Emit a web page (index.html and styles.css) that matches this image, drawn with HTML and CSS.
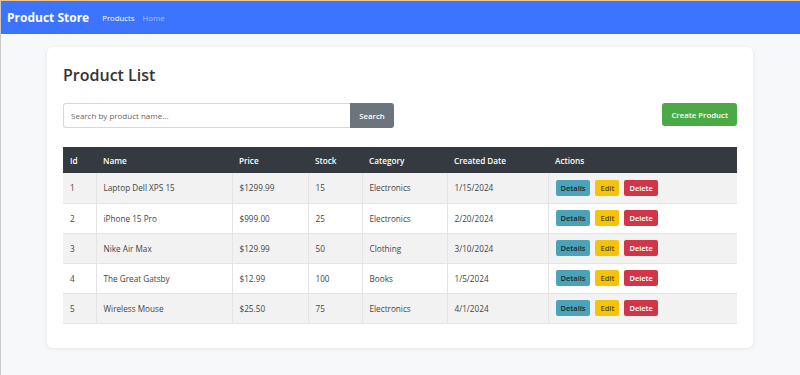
FILE: index.html
```html
<!DOCTYPE html>
<html lang="en">
<head>
    <meta charset="UTF-8">
    <meta name="viewport" content="width=device-width, initial-scale=1.0">
    <title>Product Store</title>
    <link rel="stylesheet" href="styles.css">
</head>
<body>
    <div class="frame">
        <nav class="navbar">
            <span class="brand">Product Store</span>
            <a class="nav-link active" href="#">Products</a>
            <a class="nav-link" href="#">Home</a>
        </nav>

        <main class="page">
            <div class="card">
                <h1>Product List</h1>

                <div class="toolbar">
                    <form class="search" onsubmit="return false;">
                        <input type="text" placeholder="Search by product name...">
                        <button class="btn btn-secondary" type="submit">Search</button>
                    </form>
                    <button class="btn btn-success">Create Product</button>
                </div>

                <table class="table">
                    <thead>
                        <tr>
                            <th class="col-id">Id</th>
                            <th class="col-name">Name</th>
                            <th class="col-price">Price</th>
                            <th class="col-stock">Stock</th>
                            <th class="col-cat">Category</th>
                            <th class="col-date">Created Date</th>
                            <th>Actions</th>
                        </tr>
                    </thead>
                    <tbody>
                        <tr>
                            <td>1</td><td>Laptop Dell XPS 15</td><td>$1299.99</td><td>15</td><td>Electronics</td><td>1/15/2024</td>
                            <td class="actions"><button class="btn-sm info">Details</button><button class="btn-sm warning">Edit</button><button class="btn-sm danger">Delete</button></td>
                        </tr>
                        <tr>
                            <td>2</td><td>iPhone 15 Pro</td><td>$999.00</td><td>25</td><td>Electronics</td><td>2/20/2024</td>
                            <td class="actions"><button class="btn-sm info">Details</button><button class="btn-sm warning">Edit</button><button class="btn-sm danger">Delete</button></td>
                        </tr>
                        <tr>
                            <td>3</td><td>Nike Air Max</td><td>$129.99</td><td>50</td><td>Clothing</td><td>3/10/2024</td>
                            <td class="actions"><button class="btn-sm info">Details</button><button class="btn-sm warning">Edit</button><button class="btn-sm danger">Delete</button></td>
                        </tr>
                        <tr>
                            <td>4</td><td>The Great Gatsby</td><td>$12.99</td><td>100</td><td>Books</td><td>1/5/2024</td>
                            <td class="actions"><button class="btn-sm info">Details</button><button class="btn-sm warning">Edit</button><button class="btn-sm danger">Delete</button></td>
                        </tr>
                        <tr>
                            <td>5</td><td>Wireless Mouse</td><td>$25.50</td><td>75</td><td>Electronics</td><td>4/1/2024</td>
                            <td class="actions"><button class="btn-sm info">Details</button><button class="btn-sm warning">Edit</button><button class="btn-sm danger">Delete</button></td>
                        </tr>
                    </tbody>
                </table>
            </div>
        </main>
    </div>
</body>
</html>
```

FILE: styles.css
```css
* {
    box-sizing: border-box;
}

body {
    margin: 0;
    font-family: "Open Sans", "Noto Sans", sans-serif;
    background-color: #f7f8fa;
    color: #333;
}

/* thin window edge seen in the capture */
.frame {
    min-height: 375px;
    border-top: 1px solid #f2c48c;
    border-left: 1px solid #c9c9c9;
}

.navbar {
    display: flex;
    align-items: center;
    height: 33px;
    padding: 0 6px;
    background-color: #3d74ff;
}

.brand {
    font-size: 12px;
    font-weight: 700;
    color: #fff;
    margin-right: 13px;
}

.nav-link {
    font-size: 7.8px;
    color: rgba(255, 255, 255, 0.55);
    text-decoration: none;
    margin-right: 8px;
}

.nav-link.active {
    color: #fff;
}

.page {
    padding: 13px 47px 0 46px;
}

.card {
    background: #fff;
    border-radius: 6px;
    box-shadow: 0 1px 4px rgba(0, 0, 0, 0.08);
    padding: 16px 16px 24px;
}

h1 {
    margin: 0 0 16px;
    font-size: 16px;
    font-weight: 600;
    color: #333;
    line-height: 24px;
}

.toolbar {
    display: flex;
    justify-content: space-between;
    align-items: flex-start;
    margin-bottom: 19px;
}

.search {
    display: flex;
    width: 331px;
}

.search input {
    flex: 1;
    height: 25px;
    border: 1px solid #d6d9dc;
    border-right: none;
    border-radius: 3px 0 0 3px;
    padding: 0 7px;
    font-family: inherit;
    font-size: 8px;
    color: #333;
}

.search input::placeholder {
    color: #666;
}

.btn {
    border: none;
    border-radius: 3px;
    color: #fff;
    font-family: inherit;
    font-size: 7.8px;
    font-weight: 600;
    cursor: pointer;
}

.btn-secondary {
    width: 44px;
    height: 25px;
    background-color: #6c757d;
    border-radius: 0 3px 3px 0;
}

.btn-success {
    height: 23px;
    padding: 0 9px;
    background-color: #4aaa45;
}

.table {
    width: 100%;
    border-collapse: collapse;
    font-size: 8.2px;
}

.table th {
    background-color: #343a40;
    color: #fff;
    font-weight: 600;
    text-align: left;
    height: 26px;
    padding: 0 7px;
}

.table td {
    height: 30px;
    padding: 0 7px;
    border-left: 1px solid #e4e4e4;
    border-bottom: 1px solid #e4e4e4;
    color: #444;
}

.table td:first-child {
    border-left: none;
}

.table tbody tr:nth-child(odd) td {
    background-color: #f2f2f2;
}

.col-id { width: 33px; }
.col-name { width: 136px; }
.col-price { width: 76px; }
.col-stock { width: 54px; }
.col-cat { width: 85px; }
.col-date { width: 101px; }

.actions {
    white-space: nowrap;
}

.btn-sm {
    height: 16px;
    padding: 0 5px;
    margin-right: 5px;
    border: none;
    border-radius: 2px;
    font-family: inherit;
    font-size: 7.5px;
    font-weight: 600;
    cursor: pointer;
}

.info {
    background-color: #4aa3b9;
    color: #1a2a30;
}

.warning {
    background-color: #f5c30a;
    color: #5a4a10;
}

.danger {
    background-color: #d23448;
    color: #fff;
}
```
